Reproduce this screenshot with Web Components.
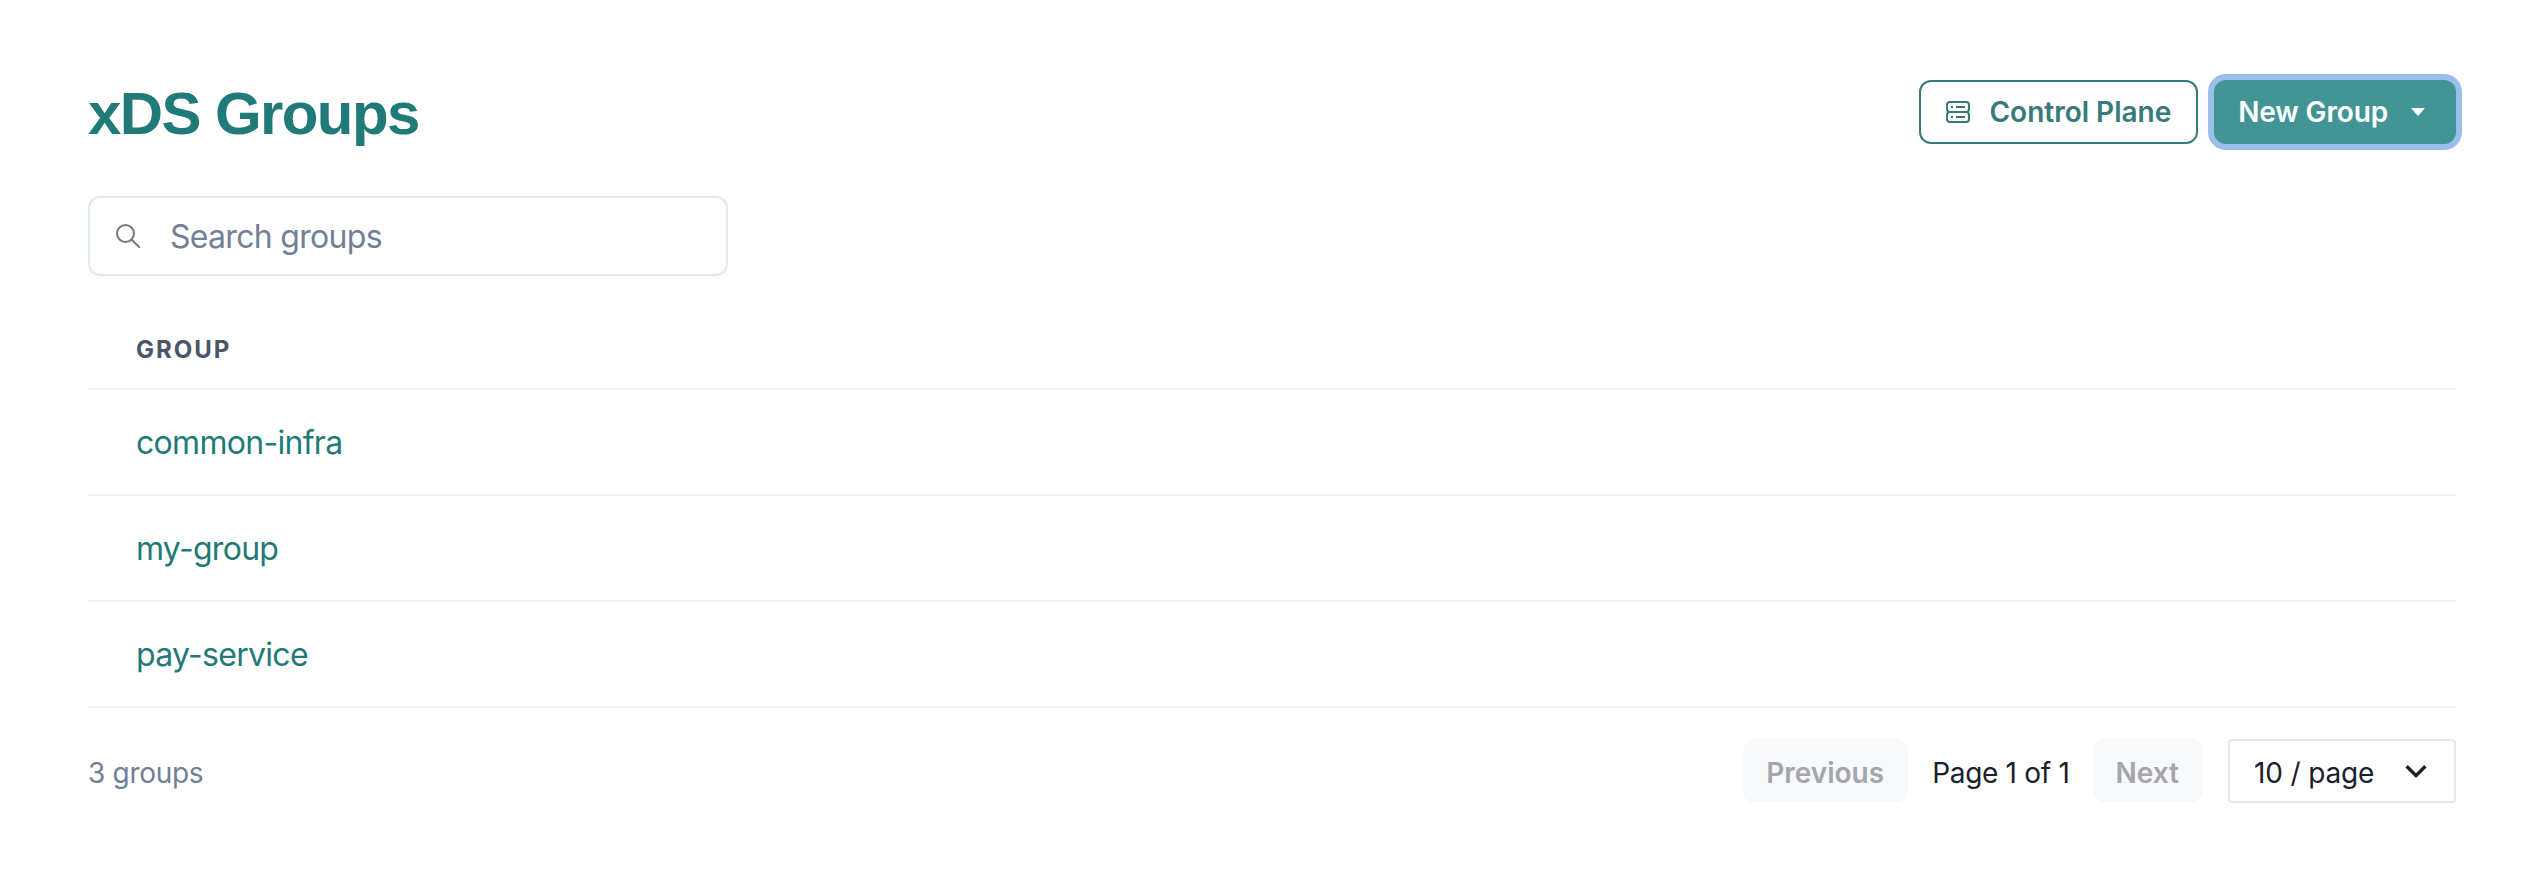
<!DOCTYPE html>
<html><head><meta charset="utf-8"><style>
html,body{margin:0;background:#fff;height:100%}
body{font-family:Inter,sans-serif;color:#1a202c;overflow:hidden}
</style></head><body>
<template id="t-page"><style>
:host{display:block;padding:76px 88px 0}
</style><slot></slot></template>
<template id="t-header"><style>
:host{display:flex;align-items:center;justify-content:space-between;height:72px}
h1{margin:0;padding-top:3px;font:700 60px/72px "Liberation Sans",sans-serif;letter-spacing:-1.6px;color:#1f7a78}
.a{display:flex;gap:16px;align-items:center}
</style><h1><slot name="title"></slot></h1><div class="a"><slot></slot></div></template>
<template id="t-btn"><style>
:host{display:inline-flex;align-items:center;box-sizing:border-box;height:64px;border-radius:12px;font:600 28px/1 Inter,sans-serif;white-space:nowrap}
:host([variant=outline]){border:2px solid #367a7a;color:#367a7a;padding:0 25px 0 24px;background:#fff;gap:18px}
:host([variant=solid]){background:#429594;color:#fff;padding:0 31px 0 24px;gap:23px;box-shadow:0 0 0 6px #9ac0ea;letter-spacing:-.15px}
:host([variant=ghost]){background:#f8f9fb;color:#a3a6ab;padding:3px 24px 0 23px}
</style><slot></slot></template>
<template id="t-search"><style>
:host{display:flex;align-items:center;box-sizing:border-box;width:640px;height:80px;margin-top:48px;border:2px solid #e2e8f0;border-radius:12px;background:#fff}
svg{margin-left:26px;width:24px;height:24px;flex:none}
span{margin-left:30px;padding-top:2px;font:400 32px/1 Inter,sans-serif;letter-spacing:-.7px;color:#718096}
</style><svg viewBox="0 0 24 24" fill="none" stroke="#7a7a7a" stroke-width="2"><circle cx="9.5" cy="9.5" r="8.5"/><path d="M15.7 15.7L24 24"/></svg><span><slot></slot></span></template>
<template id="t-table"><style>
:host{display:block;margin-top:36px}
</style><slot></slot></template>
<template id="t-th"><style>
:host{display:block;height:78px;box-sizing:border-box;padding-left:48px;border-bottom:2px solid #edf2f7;font:700 24px/76px Inter,sans-serif;letter-spacing:2px;color:#4a5568;text-transform:uppercase}
</style><slot></slot></template>
<template id="t-row"><style>
:host{display:block;height:106px;box-sizing:border-box;padding:2px 0 0 48px;border-bottom:2px solid #edf2f7;font:400 32px/102px Inter,sans-serif;letter-spacing:-.7px;color:#1f7a78}
</style><slot></slot></template>
<template id="t-footer"><style>
:host{display:flex;align-items:center;justify-content:space-between;margin-top:30px;height:66px}
.c{padding-top:3px;font:400 28px/1 Inter,sans-serif;letter-spacing:-.3px;color:#718096}
.r{display:flex;align-items:center}
</style><span class="c"><slot name="count"></slot></span><div class="r"><slot></slot></div></template>
<template id="t-select"><style>
:host{display:flex;align-items:center;justify-content:space-between;box-sizing:border-box;width:228px;height:64px;margin-left:25px;padding:0 22px 0 24px;border:2px solid #e2e8f0;border-radius:4px;font:400 28px/1 Inter,sans-serif;letter-spacing:-.15px;color:#1a202c}
span{padding-top:3px}
svg{width:32px;height:32px}
</style><span><slot></slot></span><svg viewBox="0 0 24 24" fill="none" stroke="#1a202c" stroke-width="2.6"><path d="M5 8.5l7 7 7-7"/></svg></template>
<template id="t-label"><style>
:host{display:inline-block;margin:0 23px 0 24px;padding-top:3px;font:400 28px/1 Inter,sans-serif;letter-spacing:-.3px;color:#1a202c}
</style><slot></slot></template>
<x-page>
<x-header><span slot="title">xDS Groups</span>
<x-btn variant="outline"><svg width="26" height="22" viewBox="0 0 26 22" fill="none" stroke="currentColor" stroke-width="2"><rect x="2" y="1" width="22" height="10" rx="3"/><rect x="2" y="11" width="22" height="10" rx="3"/><path d="M6 6h2M6 16h2M11 6h9M11 16h9"/></svg><span>Control Plane</span></x-btn>
<x-btn variant="solid"><span>New Group</span><svg width="14" height="8" viewBox="0 0 14 8"><path d="M0 0h14l-7 8z" fill="#fff"/></svg></x-btn>
</x-header>
<x-search>Search groups</x-search>
<x-table><x-th>Group</x-th><x-row>common-infra</x-row><x-row>my-group</x-row><x-row>pay-service</x-row></x-table>
<x-footer><span slot="count">3 groups</span><x-btn variant="ghost">Previous</x-btn><x-label>Page 1 of 1</x-label><x-btn variant="ghost">Next</x-btn><x-select>10 / page</x-select></x-footer>
</x-page>
<script>
for(const [n,t] of [['x-page','t-page'],['x-header','t-header'],['x-btn','t-btn'],['x-search','t-search'],['x-table','t-table'],['x-th','t-th'],['x-row','t-row'],['x-footer','t-footer'],['x-select','t-select'],['x-label','t-label']]){
customElements.define(n,class extends HTMLElement{constructor(){super();this.attachShadow({mode:'open'}).appendChild(document.getElementById(t).content.cloneNode(true))}})}
</script>
</body></html>
